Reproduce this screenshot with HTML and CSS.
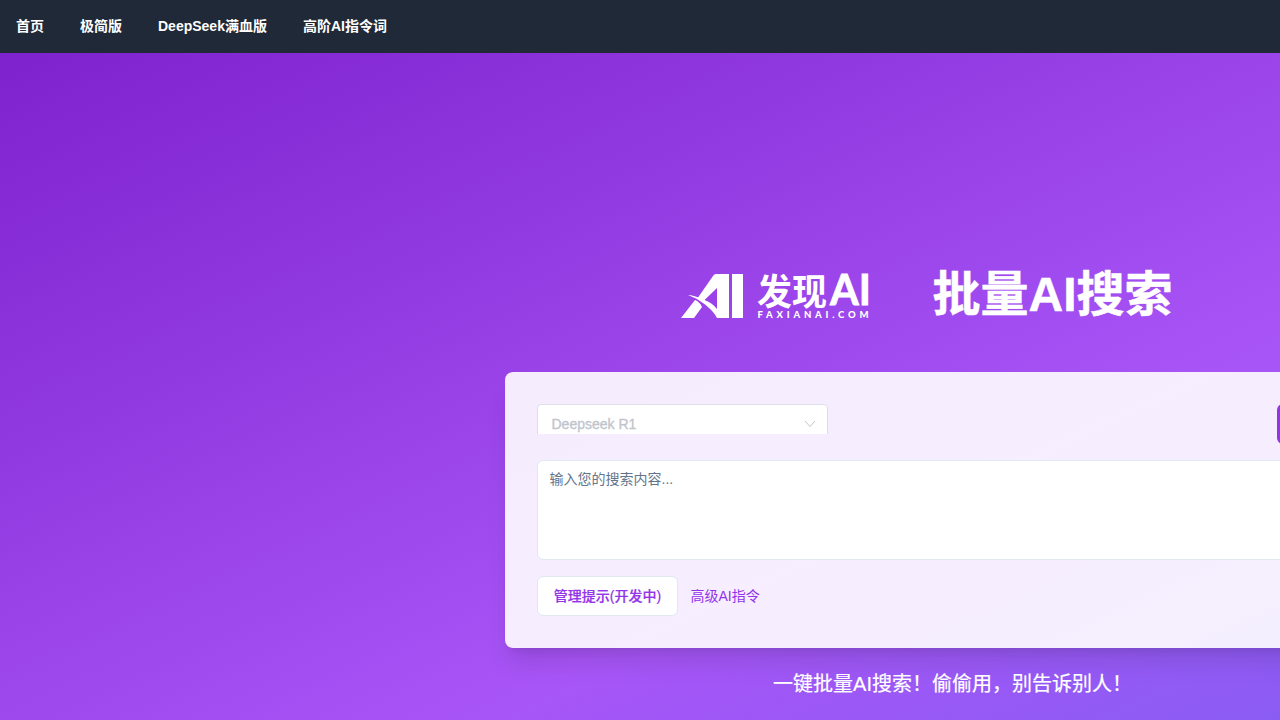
FILE: index.html
```
<!DOCTYPE html>
<html lang="zh-CN">
<head>
<meta charset="UTF-8" />
<title>批量AI搜索</title>
<link rel="stylesheet" href="styles.css">
</head>
<body>

<div class="page">
  <nav class="navbar">
    <a href="#">首页</a>
    <a href="#">极简版</a>
    <a href="#">DeepSeek满血版</a>
    <a href="#">高阶AI指令词</a>
  </nav>

  <main class="main">
    <div class="brand">
      <svg class="logo" width="188" height="48" viewBox="0 0 188 48" fill="#fff">
        <path d="M33 2H48V46H36C32 38 24 32 16 27L32 4Q33 2 35 2Z" />
        <path class="hole" d="M36 16V37C33 33 29 30 23.500 28Z" />
        <path d="M7 23C14 23 25 28 32 37L37 46C31 37 23 30 15 26.500Z" />
        <path d="M14 28C17 29 19 31 21 35L13 46H0Z" />
        <path d="M51 2H62V46H51Z" />
        <text class="logo-name" x="76" y="32.500" textLength="70" lengthAdjust="spacingAndGlyphs">发现</text>
        <text class="logo-ai" x="149" y="33" textLength="41" lengthAdjust="spacingAndGlyphs">AI</text>
        <text class="logo-url" x="76.500" y="46" textLength="111">FAXIANAI.COM</text>
      </svg>
      <h1>批量AI搜索</h1>
    </div>

    <div class="card">
      <div class="row top">
        <div class="select">
          <div class="select-input">
            <span>Deepseek R1</span>
            <svg width="12" height="8" viewBox="0 0 12 8" fill="none" stroke="#c0c4cc"><path d="M1 1L6 6.500L11 1" /></svg>
          </div>
        </div>
        <button class="search">搜索</button>
      </div>
      <textarea placeholder="输入您的搜索内容..."></textarea>
      <div class="row">
        <button class="manage">管理提示(开发中)</button>
        <a class="link" href="#">高级AI指令</a>
      </div>
    </div>

    <p class="slogan">一键批量AI搜索！偷偷用，别告诉别人！</p>
  </main>
</div>

</body>
</html>
```
FILE: styles.css
```
* {
  box-sizing: border-box;
}
body {
  margin: 0;
  height: 100vh;
  overflow: hidden;
  font-family: "Liberation Sans", "Noto Sans CJK SC", sans-serif;
  font-size: 14px;
}
.page {
  width: 1905px;
}
.navbar {
  display: flex;
  gap: 36px;
  align-items: center;
  height: 53px;
  padding: 0 16px 3px;
  background: #1f2937;
}
.navbar a {
  color: #fff;
  font-weight: bold;
  text-decoration: none;
}
.main {
  display: flex;
  flex-direction: column;
  align-items: center;
  height: 884px;
  padding-top: 204px;
  background: linear-gradient(to bottom right, #7e22ce, #a855f7, #6366f1);
}
.brand {
  display: flex;
  align-items: center;
  gap: 64px;
  width: 544px;
  height: 72px;
  margin-bottom: 43px;
}
.logo {
  flex: none;
  margin-top: 6px;
  overflow: visible;
}
.hole {
  fill: #9a41ea;
}
.logo-name {
  font-size: 36px;
  font-weight: bold;
}
.logo-ai {
  font-family: Lato, sans-serif;
  font-size: 42px;
  font-weight: bold;
  stroke: #fff;
  stroke-width: 0.8px;
}
.logo-url {
  font-family: Lato, sans-serif;
  font-size: 9.5px;
  font-weight: 900;
}
h1 {
  margin: 3px 0 0;
  color: #fff;
  font-size: 48px;
  line-height: 1;
  white-space: nowrap;
  -webkit-text-stroke: 0.5px #fff;
}
.card {
  display: flex;
  flex-direction: column;
  gap: 16px;
  width: 896px;
  padding: 32px;
  border-radius: 8px;
  background: rgba(255, 255, 255, 0.9);
  box-shadow: 0 20px 25px -5px rgba(0, 0, 0, 0.1), 0 8px 10px -6px rgba(0, 0, 0, 0.1);
}
.row {
  display: flex;
  align-items: center;
  gap: 12px;
  height: 40px;
}
.top {
  align-items: flex-start;
  justify-content: space-between;
}
.select {
  width: 291px;
  height: 30px;
  overflow: hidden;
}
.select-input {
  display: flex;
  align-items: center;
  justify-content: space-between;
  height: 40px;
  padding: 0 11px 0 14px;
  border: 1px solid #dcdfe6;
  border-radius: 4px;
  background: #fff;
  color: #c0c4cc;
  -webkit-text-stroke: 0.3px #c0c4cc;
}
button {
  height: 40px;
  border: 0;
  border-radius: 6px;
  font: inherit;
  font-weight: 500;
}
.search {
  width: 92px;
  background: #9333ea;
  color: #fff;
}
textarea {
  display: block;
  width: 100%;
  height: 100px;
  padding: 8px 12px;
  border: 1px solid #e2e8f0;
  border-radius: 6px;
  resize: none;
  font: inherit;
  line-height: 20px;
}
textarea::placeholder {
  color: #64748b;
}
.manage {
  width: 141px;
  padding: 0 0 2px 1px;
  border: 1px solid #e2e8f0;
  background: #fff;
  color: #9333ea;
  -webkit-text-stroke: 0.2px #9333ea;
}
.link {
  padding: 0 0 2px 1px;
  color: #9333ea;
  text-decoration: none;
}
.slogan {
  margin: 22px 0 0;
  color: #fff;
  font-size: 20px;
  line-height: 28px;
  -webkit-text-stroke: 0.2px #fff;
}
```
